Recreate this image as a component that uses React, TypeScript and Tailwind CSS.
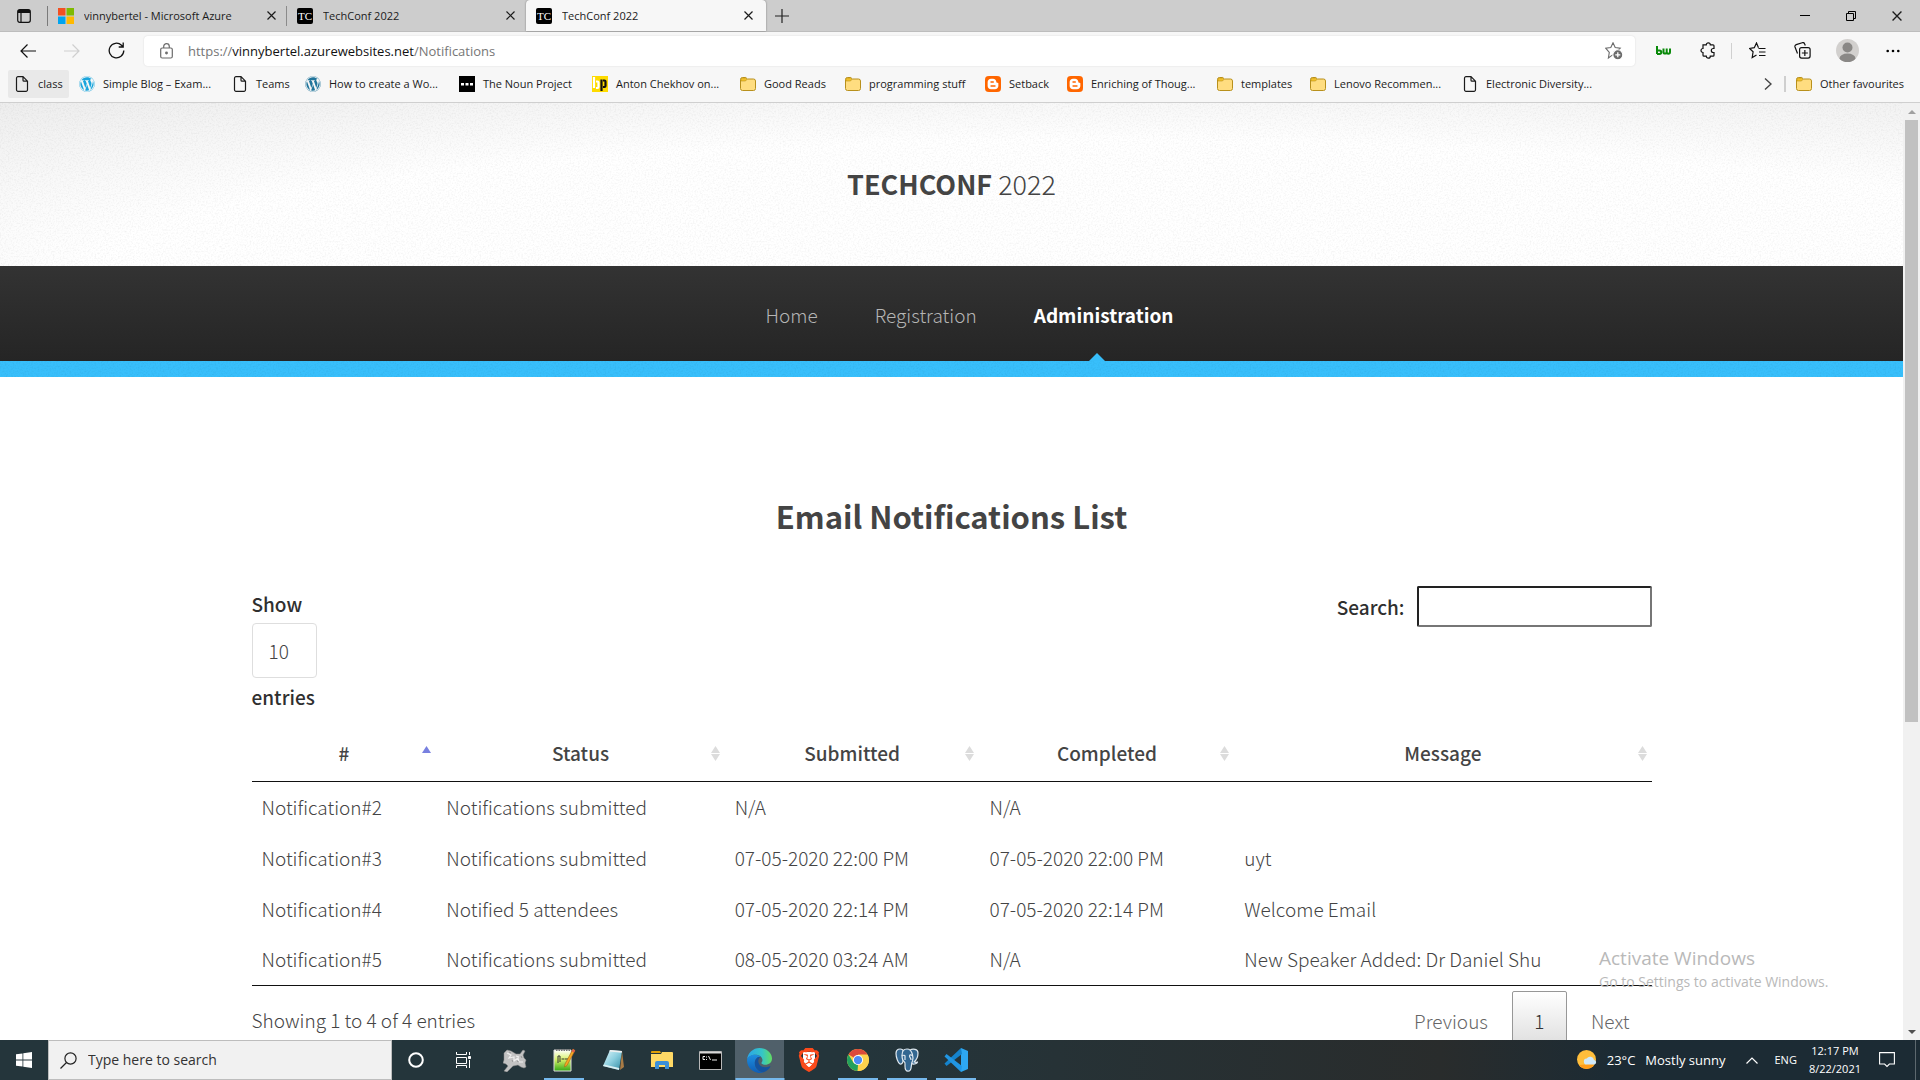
import type { ReactNode } from "react";
import { SiBlogger, SiBrave, SiPostgresql } from "react-icons/si";
import { FaWordpress } from "react-icons/fa";

/* ---------- shared icons ---------- */

const Folder = () => (
  <svg width="16" height="16" viewBox="0 0 16 16" className="shrink-0">
    <path d="M.5 3.5a2 2 0 0 1 2-2h3.2L7.5 3h6a2 2 0 0 1 2 2v7.5a2 2 0 0 1-2 2h-11a2 2 0 0 1-2-2z" fill="#ffdd80" stroke="#b8901c" />
    <path d="M1 3.5A1.5 1.5 0 0 1 2.500 2h3L7 3.300 5.500 5H1z" fill="#f2c029" stroke="#b8901c" strokeWidth=".6" />
  </svg>
);
const Page = () => (
  <svg width="16" height="16" viewBox="0 0 16 16" fill="none" stroke="#1b1b1b" strokeWidth="1.200" className="shrink-0">
    <path d="M9 .7H4a1.500 1.500 0 0 0-1.500 1.500v11.600A1.500 1.500 0 0 0 4 15.300h8a1.500 1.500 0 0 0 1.500-1.500V5.200zM9 .7v3.500a1 1 0 0 0 1 1h3.500" />
  </svg>
);
const WordPress = ({ light }: { light?: boolean }) => (
  <FaWordpress size={16} className={light ? "shrink-0 text-[#1aa5dc]" : "shrink-0 text-[#21759b]"} />
);
const Noun = () => (
  <svg width="16" height="16" viewBox="0 0 16 16" className="shrink-0">
    <path d="M0 0h16v16H0z" />
    <path d="M2 7h3v2.500H2zM6.500 7h3v2.500h-3zM11 7h3v2.500h-3z" fill="#fff" />
  </svg>
);
const Bp = () => (
  <svg width="16" height="16" viewBox="0 0 16 16" className="shrink-0" fill="none" strokeWidth="2.200">
    <path d="M0 0h16v16H0z" fill="#fedb00" />
    <path d="M2 1v11M4 5.500h1.500a1 1 0 0 1 1 1V11a1 1 0 0 1-1 1H4" stroke="#fff" />
    <path d="M9.500 3.500V15M11 4.500h1.500a1 1 0 0 1 1 1V10a1 1 0 0 1-1 1H11" stroke="#111" />
  </svg>
);
const Blogger = () => (
  <span className="grid size-4 shrink-0 place-items-center rounded-sm bg-[#ff6600] text-white">
    <SiBlogger size={16} className="rounded-sm bg-white text-[#ff6600]" />
  </span>
);
const Azure = () => (
  <svg width="16" height="16" viewBox="0 0 16 16" className="shrink-0">
    <path d="M0 0h7.500v7.500H0z" fill="#f25022" />
    <path d="M8.500 0H16v7.500H8.500z" fill="#7fba00" />
    <path d="M0 8.500h7.500V16H0z" fill="#00a4ef" />
    <path d="M8.500 8.500H16V16H8.500z" fill="#ffb900" />
  </svg>
);
const Tc = () => (
  <span aria-hidden className="grid size-4 shrink-0 place-items-center rounded-xs bg-black font-['Liberation_Serif',serif] text-[11px] leading-4 text-white">TC</span>
);
const Cross = ({ size = 9 }: { size?: number }) => (
  <svg width={size} height={size} viewBox="0 0 9 9" stroke="currentColor" strokeWidth="1.200">
    <path d="M.5.5l8 8M8.500.5l-8 8" />
  </svg>
);

/* ---------- browser chrome ---------- */

function Tab({ icon, title, active, divider }: { icon: ReactNode; title: string; active?: boolean; divider?: boolean }) {
  return (
    <div
      className={
        active
          ? "flex h-full w-60 items-center rounded-t bg-[#f7f7f7] pr-2.5 pl-[10px] shadow-[0_0_2px_rgba(0,0,0,0.45)]"
          : "relative flex h-full w-[239px] items-center pr-2 pl-[10px]"
      }
    >
      {icon}
      <span className="ml-[10px] flex-1 truncate">{title}</span>
      <button aria-label={`Close ${title}`} className="grid size-4 place-items-center">
        <Cross />
      </button>
      {divider && <i className="absolute top-1.5 right-0 h-5 w-px bg-[#8b8b8b]" />}
    </div>
  );
}

function TabBar() {
  return (
    <div className="flex h-8 items-center border-b border-[#bdbdbd] bg-[#cdcdcd]">
      <button aria-label="Tab actions" className="grid h-full w-12 place-items-center">
        <svg width="14" height="14" viewBox="0 0 14 14" fill="none" stroke="#111" strokeWidth="1.200">
          <rect x=".7" y=".7" width="12.600" height="12.600" rx="2" />
          <path d="M1 2.500h12" strokeWidth="3" />
          <path d="M4 3v10" />
        </svg>
      </button>
      <i className="-ml-px h-5 w-px bg-[#7a7a7a]" />
      <Tab icon={<Azure />} title="vinnybertel - Microsoft Azure" divider />
      <Tab icon={<Tc />} title="TechConf 2022" />
      <Tab icon={<Tc />} title="TechConf 2022" active />
      <button aria-label="New tab" className="grid h-full w-8 place-items-center">
        <svg width="14" height="14" viewBox="0 0 14 14" stroke="#222" strokeWidth="1.200"><path d="M7 0v14M0 7h14" /></svg>
      </button>
      <div className="ml-auto flex h-full">
        <button aria-label="Minimize" className="grid w-[46px] place-items-center">
          <svg width="10" height="10" viewBox="0 0 10 10" stroke="#000"><path d="M0 4.500h10" /></svg>
        </button>
        <button aria-label="Restore" className="grid w-[46px] place-items-center">
          <svg width="10" height="10" viewBox="0 0 10 10" fill="none" stroke="#000"><path d="M.5 2.500h7v7h-7zM2.500 2.500v-2h7v7h-2" /></svg>
        </button>
        <button aria-label="Close" className="grid w-[46px] place-items-center">
          <Cross size={10} />
        </button>
      </div>
    </div>
  );
}

function Toolbar() {
  return (
    <div className="flex h-[37px] items-center bg-[#f7f7f7]">
      <button aria-label="Back" className="grid w-11 place-items-center pl-3">
        <svg width="16" height="14" viewBox="0 0 16 14" fill="none" stroke="#111" strokeWidth="1.200"><path d="M16 7H1M7.500.5L1 7l6.500 6.500" /></svg>
      </button>
      <button aria-label="Forward" className="grid w-14 place-items-center">
        <svg width="16" height="14" viewBox="0 0 16 14" fill="none" stroke="#cfcfcf" strokeWidth="1.200"><path d="M0 7h15M8.500.5L15 7l-6.500 6.500" /></svg>
      </button>
      <button aria-label="Refresh" className="grid w-8 place-items-center">
        <svg width="17" height="17" viewBox="0 0 17 17" fill="none" stroke="#111" strokeWidth="1.300"><path d="M15.800 8.500A7.300 7.300 0 1 1 13.500 3.200L15 4.700M15.200.5v4.500h-4.500" /></svg>
      </button>
      <div className="ml-3 flex h-[30px] flex-1 items-center rounded bg-white px-4 shadow-[0_0_2px_rgba(0,0,0,0.12)]">
        <svg width="13" height="16" viewBox="0 0 13 16" fill="none" stroke="#6b6b6b" strokeWidth="1.200">
          <rect x=".7" y="5" width="11.600" height="10" rx="1.500" />
          <path d="M3.700 5V3.500a2.800 2.800 0 0 1 5.600 0V5" />
          <circle cx="6.500" cy="10" r=".8" fill="#6b6b6b" />
        </svg>
        <a href="#url" className="ml-[15px] flex-1 text-[13px] text-[#767676]">
          https://<span className="text-[#111]">vinnybertel.azurewebsites.net</span>/Notifications
        </a>
        <button aria-label="Add to favourites" className="-mr-1">
          <svg width="18" height="18" viewBox="0 0 18 18" fill="none" stroke="#6b6b6b" strokeWidth="1.100">
            <path d="M8 .8l2.200 4.700 5 .7-3.700 3.600L8 12.600 3.400 16l.9-5.700L.7 6.200l5.100-.7z" />
            <circle cx="12.800" cy="12.800" r="5" fill="#6b6b6b" stroke="#fff" />
            <path d="M12.800 10.300v5M10.300 12.800h5" stroke="#fff" strokeWidth="1.300" />
          </svg>
        </button>
      </div>
      <div className="flex items-center pl-[5px]">
        <button aria-label="bw" className="grid w-[46px] place-items-center">
          <svg width="15" height="9" viewBox="0 0 15 9" fill="none" stroke="#0a8a0a" strokeWidth="2">
            <path d="M1 0v8M1 4.500h2.500a1.600 1.600 0 0 1 0 3.500H1M7.500 2.500V6a1.500 1.500 0 0 0 3.200 0V2.500M10.700 6A1.500 1.500 0 0 0 14 6V2.500" />
          </svg>
        </button>
        <button aria-label="Extensions" className="grid w-11 place-items-center">
          <svg width="17" height="17" viewBox="0 0 17 17" fill="none" stroke="#111" strokeWidth="1.200">
            <path d="M3 2.800h3.300a2 2 0 0 1 4 0h2.700a1 1 0 0 1 1 1v2.700h-.7a2 2 0 0 0 0 4h.7v2.700a1 1 0 0 1-1 1h-2.700a2 2 0 0 1-4 0H4a1 1 0 0 1-1-1v-2.700a2 2 0 0 1 0-4z" />
          </svg>
        </button>
        <i className="ml-px h-4 w-px bg-[#d0d0d0]" />
        <button aria-label="Favourites" className="grid w-[50px] place-items-center">
          <svg width="17" height="17" viewBox="0 0 17 17" fill="none" stroke="#111" strokeWidth="1.200">
            <path d="M9.500 5.800L7.500 1 5.300 5.700.6 6.400l3.500 3.400-.9 5.700 4.300-2.600M9.500 6.500H16.500M10 10h6.500M10 13.500h6.500" />
          </svg>
        </button>
        <button aria-label="Collections" className="grid w-10 place-items-center">
          <svg width="17" height="17" viewBox="0 0 17 17" fill="none" stroke="#111" strokeWidth="1.200">
            <rect x="5.600" y="5.600" width="10.500" height="10.500" rx="2" />
            <path d="M10.850 8v6M7.850 11h6M3.500 11.500L1 5a2 2 0 0 1 1.200-2.400l6-1.900a2 2 0 0 1 2.500 1.300l.6 1.500" />
          </svg>
        </button>
        <button aria-label="Profile" className="grid w-[50px] place-items-center">
          <svg width="23" height="23" viewBox="0 0 23 23">
            <clipPath id="avatar"><circle cx="11.500" cy="11.500" r="11.500" /></clipPath>
            <g clipPath="url(#avatar)">
              <path d="M0 0h23v23H0z" fill="#d2d0ce" />
              <circle cx="11.500" cy="8.500" r="5" fill="#8a8886" />
              <ellipse cx="11.500" cy="19.500" rx="8" ry="5" fill="#8a8886" />
            </g>
          </svg>
        </button>
        <button aria-label="More" className="grid w-12 place-items-center pr-1.5">
          <svg width="14" height="4" viewBox="0 0 14 4"><circle cx="1.700" cy="2" r="1.300" /><circle cx="7" cy="2" r="1.300" /><circle cx="12.300" cy="2" r="1.300" /></svg>
        </button>
      </div>
    </div>
  );
}

const bookmarks: { label: string; icon: ReactNode; width: string; on?: boolean }[] = [
  { label: "class", icon: <Page />, width: "w-[61px]", on: true },
  { label: "Simple Blog – Exam...", icon: <WordPress light />, width: "w-[149px]" },
  { label: "Teams", icon: <Page />, width: "w-[69px]" },
  { label: "How to create a Wo...", icon: <WordPress />, width: "w-[150px]" },
  { label: "The Noun Project", icon: <Noun />, width: "w-[129px]" },
  { label: "Anton Chekhov on...", icon: <Bp />, width: "w-[144px]" },
  { label: "Good Reads", icon: <Folder />, width: "w-[101px]" },
  { label: "programming stuff", icon: <Folder />, width: "w-[136px]" },
  { label: "Setback", icon: <Blogger />, width: "w-[78px]" },
  { label: "Enriching of Thoug...", icon: <Blogger />, width: "w-[146px]" },
  { label: "templates", icon: <Folder />, width: "w-[89px]" },
  { label: "Lenovo Recommen...", icon: <Folder />, width: "w-[148px]" },
  { label: "Electronic Diversity...", icon: <Page />, width: "w-[150px]" },
];

function Bookmarks() {
  return (
    <div className="flex h-[34px] items-center border-b border-[#cfcfcf] bg-[#f7f7f7] pb-1 pl-2">
      <nav aria-label="Favourites bar" className="flex gap-1">
        {bookmarks.map((b) => (
          <a
            key={b.label}
            href="#bookmark"
            className={`flex h-7 items-center gap-2 rounded-xs pl-1.5 whitespace-nowrap ${b.width} ${b.on ? "bg-[#e9e9e9]" : ""}`}
          >
            {b.icon}
            {b.label}
          </a>
        ))}
      </nav>
      <button aria-label="More favourites" className="ml-auto grid w-8 place-items-center">
        <svg width="8" height="12" viewBox="0 0 8 12" fill="none" stroke="#444" strokeWidth="1.400"><path d="M1 .5L7 6l-6 5.500" /></svg>
      </button>
      <i className="h-4 w-0.5 bg-[#cfcfcf]" />
      <a href="#other" className="ml-[10px] flex w-[124px] items-center gap-2">
        <Folder />
        Other favourites
      </a>
    </div>
  );
}

/* ---------- site ---------- */

const Grain = ({ opacity }: { opacity: string }) => (
  <svg aria-hidden className={`pointer-events-none absolute inset-0 size-full ${opacity}`}>
    <filter id="grain">
      <feTurbulence type="fractalNoise" baseFrequency="0.6" numOctaves="2" />
      <feColorMatrix values="0 0 0 0 0  0 0 0 0 0  0 0 0 0 0  2 0 0 0 -0.85" />
    </filter>
    <rect width="100%" height="100%" filter="url(#grain)" />
  </svg>
);

function SiteHeader() {
  return (
    <header>
      <div className="relative grid h-[163px] place-items-center bg-[radial-gradient(ellipse_75%_110%_at_58%_100%,#fff_70%,#f6f6f6_95%,#ebebeb_125%)] pb-0.5">
        <Grain opacity="opacity-5" />
        <h1 className="relative text-[27px] leading-10 font-light text-[#444]">
          <strong className="font-bold">TECHCONF</strong> 2022
        </h1>
      </div>
      <nav className="flex h-[95px] items-stretch justify-center gap-[57px] bg-linear-to-b from-[#333] to-[#252525] pl-9 text-[#b5b5b5]">
        <a href="#home" className="flex items-center pt-0.5">Home</a>
        <a href="#registration" className="flex items-center pt-0.5">Registration</a>
        <a href="#administration" aria-current="page" className="relative flex items-center pt-0.5 font-bold text-white">
          Administration
          <i className="absolute bottom-0 left-[55px] size-0 border-x-8 border-b-8 border-x-transparent border-b-[#37bdf9]" />
        </a>
      </nav>
      <div className="relative h-4 bg-[#38bffb]">
        <Grain opacity="opacity-5" />
      </div>
    </header>
  );
}

const columns = [
  { name: "#", width: "w-[13.2%]" },
  { name: "Status", width: "w-[20.6%]" },
  { name: "Submitted", width: "w-[18.2%]" },
  { name: "Completed", width: "w-[18.2%]" },
  { name: "Message", width: "w-[29.8%]" },
];
const rows = [
  ["Notification#2", "Notifications submitted", "N/A", "N/A", ""],
  ["Notification#3", "Notifications submitted", "07-05-2020 22:00 PM", "07-05-2020 22:00 PM", "uyt"],
  ["Notification#4", "Notified 5 attendees", "07-05-2020 22:14 PM", "07-05-2020 22:14 PM", "Welcome Email"],
  ["Notification#5", "Notifications submitted", "08-05-2020 03:24 AM", "N/A", "New Speaker Added: Dr Daniel Shu"],
];

const SortIcon = ({ sorted }: { sorted: boolean }) => (
  <svg width="9" height="15" viewBox="0 0 9 15" className="absolute top-1/2 right-[5px] -mt-[7px]">
    <path d="M4.500 0L9 7H0z" fill={sorted ? "#7880e0" : "#dcdcdc"} />
    {!sorted && <path d="M4.500 15L0 8h9z" fill="#dcdcdc" />}
  </svg>
);

function Notifications() {
  return (
    <main className="mx-auto w-full max-w-[1400px] pt-[115px] text-[#444]">
      <h2 className="text-center text-[31px] leading-12 font-bold">Email Notifications List</h2>
      <div className="mt-[46px] flex items-start justify-between font-medium text-[#2f2f2f]">
        <label className="flex flex-col items-start pt-0.5 leading-8">
          Show
          <select defaultValue="10" className="my-[3px] h-[55px] w-[65px] appearance-none rounded border border-[#dedede] bg-white px-4 font-light text-[#444]">
            <option>10</option>
            <option>25</option>
          </select>
          entries
        </label>
        <label className="flex items-center gap-3">
          Search:
          <input type="search" className="h-[41px] w-[235px] rounded-xs border-2 border-t-[#222] border-r-[#767676] border-b-[#767676] border-l-[#222] bg-white px-2" />
        </label>
      </div>
      <table className="mt-[13px] w-full table-fixed border-collapse border-b border-[#111]">
        <thead>
          <tr className="h-[55px] border-b border-[#111]">
            {columns.map((c, i) => (
              <th key={c.name} className={`relative px-[18px] text-center font-medium ${c.width}`}>
                {c.name}
                <SortIcon sorted={i === 0} />
              </th>
            ))}
          </tr>
        </thead>
        <tbody>
          {rows.map((r) => (
            <tr key={r[0]} className="h-[51px]">
              {r.map((cell, i) => (
                <td key={i} className="px-[10px]">{cell}</td>
              ))}
            </tr>
          ))}
        </tbody>
      </table>
      <div className="flex items-start justify-between">
        <p className="pt-[18px] leading-8">Showing 1 to 4 of 4 entries</p>
        <div className="flex gap-0.5 pt-[5px] text-[#666]">
          <button className="h-[60px] px-[22px]">Previous</button>
          <button aria-current="page" className="h-[60px] w-[55px] rounded-xs border border-[#979797] bg-linear-to-b from-white to-[#dcdcdc] text-[#333]">1</button>
          <button className="h-[60px] px-[22px]">Next</button>
        </div>
      </div>
    </main>
  );
}

function Scrollbar() {
  return (
    <div className="flex w-[17px] flex-col items-center bg-[#f1f1f1]">
      <button aria-label="Scroll up" className="grid h-[17px] w-full shrink-0 place-items-center">
        <svg width="8" height="4" viewBox="0 0 8 4" fill="#a0a0a0"><path d="M4 0l4 4H0z" /></svg>
      </button>
      <div className="min-h-0 w-full flex-1 px-0.5">
        <div className="h-2/3 bg-[#c1c1c1]" />
      </div>
      <button aria-label="Scroll down" className="grid h-[17px] w-full shrink-0 place-items-center">
        <svg width="8" height="4" viewBox="0 0 8 4" fill="#505050"><path d="M0 0h8L4 4z" /></svg>
      </button>
    </div>
  );
}

/* ---------- taskbar ---------- */

const Goat = () => (
  <svg width="24" height="24" viewBox="0 0 24 24" fill="#c2c2c2" stroke="#8a8a8a" strokeWidth=".5">
    <path d="M1 5l3-3 4 1 5 3 4 0 3-4 2 1-2 4 1 3 2 2-1 3 1 4-2 1-3-1-3-2-5 1-4 4-2 2-3-1 4-5-2-2-3-1 1-3z" />
    <path d="M4 5l4 2-2 3 5-1 0 4 4-3 1 4 4 0M13 8l3 1" fill="none" stroke="#efefef" strokeWidth="1.200" />
    <path d="M9 12l1 2M14 13l2 1M18 8l1 2M6 4l2 1" stroke="#666" />
  </svg>
);
const NotepadPP = () => (
  <svg width="24" height="24" viewBox="0 0 24 24">
    <defs><linearGradient id="npp" x2="0" y2="1"><stop offset="0" stopColor="#fff" /><stop offset=".45" stopColor="#d8f26a" /><stop offset="1" stopColor="#32a814" /></linearGradient></defs>
    <path d="M2 2h17v21H2z" fill="url(#npp)" stroke="#ddd" />
    <path d="M4 2h14" stroke="#777" strokeWidth="2" strokeDasharray="1.500 1" />
    <path d="M6 8v7M6 8h2v6M9.500 11h3M13 11h3" stroke="#333" fill="none" />
    <path d="M21 1l2 1.500-8 15-2.500 1.500.5-3z" fill="#f5a623" stroke="#a8641a" strokeWidth=".6" />
    <path d="M21 1l2 1.500-1 2-2.300-1z" fill="#e05a4e" />
  </svg>
);
const Notepad = () => (
  <svg width="24" height="24" viewBox="0 0 24 24">
    <defs><linearGradient id="np" x2="1" y2="1"><stop offset="0" stopColor="#e3f7fb" /><stop offset=".5" stopColor="#8ccfdf" /><stop offset="1" stopColor="#2f8ba3" /></linearGradient></defs>
    <path d="M21 3l2 16-4 3z" fill="#a87b45" />
    <path d="M9 2l12 1-3 19-16-4z" fill="url(#np)" />
    <path d="M9 2l12 1-.3 1.800L8.200 3.600z" fill="#f0f0f0" />
    <path d="M2 18l16 4 .3-2L3 16.500z" fill="#d8eef2" />
  </svg>
);
const Explorer = () => (
  <svg width="22" height="19" viewBox="0 0 22 19">
    <path d="M0 1a1 1 0 0 1 1-1h8l1 2H0z" fill="#e0a008" />
    <path d="M0 3h10l1-2h10a1 1 0 0 1 1 1v14H0z" fill="#ffd965" />
    <path d="M4 18v-6a2 2 0 0 1 2-2h10a2 2 0 0 1 2 2v6h-4v-4H8v4z" fill="#3a8fd8" />
  </svg>
);
const Terminal = () => (
  <svg width="23" height="19" viewBox="0 0 23 19">
    <path d="M.5.5h22v18H.5z" stroke="#b8b8b8" />
    <path d="M1 1h21v1.500H1z" fill="#d8d8d8" />
    <path d="M6 5.500H4v3h2M7.500 5.500v1M7.500 8v1M9.500 5l2 4M13 9h5" fill="none" stroke="#eee" />
  </svg>
);
const Edge = () => (
  <svg width="25" height="25" viewBox="0 0 24 24">
    <defs>
      <linearGradient id="e1" x1="0" x2="1"><stop offset="0" stopColor="#2aa6e8" /><stop offset=".6" stopColor="#35c5c8" /><stop offset="1" stopColor="#62dd62" /></linearGradient>
      <linearGradient id="e2" x2="0" y2="1"><stop offset="0" stopColor="#1d8fe0" /><stop offset="1" stopColor="#0f5db5" /></linearGradient>
    </defs>
    <path d="M.1 11A12 12 0 0 1 12 0c7 0 12 4.800 12 10 0 4-3 6-6.500 6-2.500 0-4-1-3.600-1.800.8-1 1.100-2 .9-3.200C14.300 8.500 11.500 6.500 8 6.500 4 6.500.8 9 .1 11z" fill="url(#e1)" />
    <path d="M.1 11C.8 8.500 4 6.500 8 6.500c2 0 4 .7 5.300 2C10 8 7.500 11 7.500 14.500c0 5 4 9 8.500 8.800A12 12 0 0 1 .1 11z" fill="url(#e2)" />
    <path d="M13.300 8.500C10 8 7.500 11 7.500 14.500c0 4.500 3.500 8.800 8.500 8.800 3-1 5-3 6.400-5.200.2-.4-.2-.6-.5-.5-1.400.7-3 1-4.700.9-4-.2-7-3.500-6.200-7 .3-1.300 1.200-2.400 2.300-3z" fill="#14539f" />
  </svg>
);
const Brave = () => (
  <span className="relative grid size-6 place-items-center">
    <svg width="14" height="18" viewBox="0 0 14 18" className="absolute"><path d="M1 1h12v9l-6 8-6-8z" fill="#fff" /></svg>
    <SiBrave size={24} className="relative text-[#fb4a1b]" />
  </span>
);
const Chrome = () => (
  <svg width="22" height="22" viewBox="0 0 24 24">
    <circle cx="12" cy="12" r="12" fill="#fdd24d" />
    <path d="M12 12L1.600 6A12 12 0 0 1 22.400 6H12z" fill="#db4a3b" />
    <path d="M1.600 6l5.500 9L12 17.500 11.500 24A12 12 0 0 1 1.600 6z" fill="#22a15c" />
    <path d="M12 6.500h10.600A12 12 0 0 1 11.500 24l5.200-9z" fill="#fdd24d" />
    <circle cx="12" cy="12" r="5.500" fill="#fff" />
    <circle cx="12" cy="12" r="4.500" fill="#4b8bf5" />
  </svg>
);
const Postgres = () => (
  <svg width="24" height="24" viewBox="0 0 24 24" fill="#336791" stroke="#dfe8ef" strokeWidth="1.200" strokeLinejoin="round">
    <path d="M8 2C5 0 1 1 1 5.500 1 9 3 15 5 16c1.500.5 2.500-1 3-2.500z" />
    <path d="M15 2c3-1.500 8-1 8 3 0 3-1.500 7-4 9 1.500.5 3 .3 3.500 0-.5 1.500-3 2.500-5 2l-2-3z" />
    <path d="M12 1c-4 0-5 3-5 6.500 0 3 .5 5 2.500 6.500.8.500.5 2 .5 4 0 3.500.8 5.200 3 5.200s3-1.500 3.200-4.200c.2-3 .3-4.500 1.300-6C18.500 11 18 1 12 1z" />
    <path d="M7 8c1-1 3-1 3 0v4M17 7.500c-1-1-2.500-.8-2.500.5 0 1.500 1.500 2 1.500 4" fill="none" />
  </svg>
);
const VsCode = () => (
  <svg width="24" height="24" viewBox="0 0 24 24">
    <path d="M17 0v24l7-3V3z" fill="#2ea8f2" />
    <path d="M17 0L.5 15.500l2 2.500L18 6z" fill="#1583cc" />
    <path d="M17 24L.5 8.500l2-2.500L18 18z" fill="#2196e3" />
  </svg>
);

const apps: { name: string; icon: ReactNode; state?: string; line?: string }[] = [
  { name: "Goat", icon: <Goat /> },
  { name: "Notepad++", icon: <NotepadPP />, line: "w-10" },
  { name: "Notepad", icon: <Notepad /> },
  { name: "File Explorer", icon: <Explorer /> },
  { name: "Command Prompt", icon: <Terminal /> },
  { name: "Microsoft Edge", icon: <Edge />, state: "bg-[#50606a]", line: "w-full" },
  { name: "Brave", icon: <Brave /> },
  { name: "Chrome", icon: <Chrome />, line: "w-10" },
  { name: "pgAdmin", icon: <Postgres />, line: "w-10" },
  { name: "Visual Studio Code", icon: <VsCode />, line: "w-10" },
];

function Taskbar() {
  return (
    <footer className="flex h-10 shrink-0 items-stretch bg-linear-to-r from-[#24353b] from-45% via-[#292c2c] via-75% to-[#1c2b34] to-84% text-[13px] text-white">
      <button aria-label="Start" className="grid w-12 place-items-center">
        <svg width="16" height="16" viewBox="0 0 16 16" fill="#fff"><path d="M0 2.300L6.500 1.400v6.200H0zM7.300 1.300L16 0v7.600H7.300zM0 8.400h6.500v6.200L0 13.700zM7.300 8.400H16V16l-8.700-1.300z" /></svg>
      </button>
      <label className="flex w-[344px] items-center gap-[11px] border border-[#bdbdbd] bg-[#f1f1f1] pl-[11px]">
        <svg width="17" height="17" viewBox="0 0 17 17" fill="none" stroke="#222" strokeWidth="1.200"><circle cx="10.500" cy="6.500" r="5.600" /><path d="M6.500 10.500L.5 16.500" /></svg>
        <input aria-label="Search" placeholder="Type here to search" className="min-w-0 flex-1 bg-transparent text-sm text-black outline-none placeholder:text-[#333]" />
      </label>
      <button aria-label="Cortana" className="grid w-12 place-items-center">
        <svg width="16" height="16" viewBox="0 0 16 16" fill="none" stroke="#fff" strokeWidth="2"><circle cx="8" cy="8" r="6.800" /></svg>
      </button>
      <button aria-label="Task View" className="mr-0.5 grid w-12 place-items-center">
        <svg width="16" height="16" viewBox="0 0 16 16" fill="none" stroke="#fff"><path d="M.5 0v2.500h10V0M.5 5.500h10v6H.5zM.5 16v-2.500h10V16M13.500 0v3M13.500 8v8" /><path d="M12.500 4.500h2v2h-2z" fill="#fff" /></svg>
      </button>
      {apps.map((a) => (
        <button key={a.name} aria-label={a.name} className={`relative grid w-[49px] place-items-center ${a.state ?? ""}`}>
          {a.icon}
          {a.line && <i className={`absolute bottom-0 left-1/2 h-0.5 -translate-x-1/2 bg-[#76b9ed] ${a.line}`} />}
        </button>
      ))}
      <div className="ml-auto flex items-center">
        <svg width="20" height="20" viewBox="0 0 20 20">
          <circle cx="9.500" cy="9.500" r="9.500" fill="#ffbe3c" />
          <path d="M2 15a9.500 9.500 0 0 0 14 1.500l2-5-9 3z" fill="#ff9c1a" />
          <path d="M10 14.500a3 3 0 0 1-.3-6 4 4 0 0 1 7.300 1.500 2.300 2.300 0 0 1 .5 4.500z" fill="#cfe9fb" />
        </svg>
        <span className="ml-[10px]">23°C</span>
        <span className="ml-[10px]">Mostly sunny</span>
        <button aria-label="Show hidden icons" className="ml-[21px]">
          <svg width="12" height="7" viewBox="0 0 12 7" fill="none" stroke="#fff" strokeWidth="1.200"><path d="M.5 6.500L6 1l5.500 5.500" /></svg>
        </button>
        <span className="ml-4 text-[11px]">ENG</span>
        <time className="ml-3 text-center text-[11px] leading-[18px]">
          12:17 PM
          <br />
          8/22/2021
        </time>
        <button aria-label="Notifications" className="ml-[18px]">
          <svg width="16" height="16" viewBox="0 0 16 16" fill="none" stroke="#fff" strokeWidth="1.100"><path d="M.6.6h14.800v11.400h-5L8 14.500 5.600 12h-5z" /></svg>
        </button>
        <i className="mr-1 ml-5 h-10 w-px bg-[#5d686e]" />
      </div>
    </footer>
  );
}

export default function App() {
  return (
    <div className="relative flex h-screen flex-col overflow-hidden bg-white font-['Open_Sans','Noto_Sans',sans-serif] text-[11px] leading-4 text-[#1b1b1b]">
      <TabBar />
      <Toolbar />
      <Bookmarks />
      <div className="flex min-h-0 flex-1">
        <div className="min-w-0 flex-1 overflow-hidden font-['Noto_Sans_CJK_SC',sans-serif] text-[19px] leading-8 font-light">
          <SiteHeader />
          <Notifications />
        </div>
        <Scrollbar />
      </div>
      <Taskbar />
      <div className="pointer-events-none absolute right-[84px] bottom-[88px] w-[237px] text-[#b9b9b9]">
        <p className="text-[19px] leading-7">Activate Windows</p>
        <p className="text-sm leading-5 whitespace-nowrap">Go to Settings to activate Windows.</p>
      </div>
    </div>
  );
}
